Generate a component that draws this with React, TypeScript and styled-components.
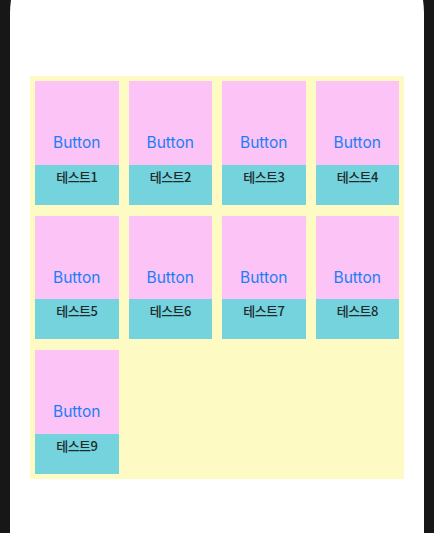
import React from "react";
import styled, { createGlobalStyle } from "styled-components";

const Global = createGlobalStyle`
  html, body { margin: 0; padding: 0; background: #171717; }
  body { font-family: Inter, "Noto Sans CJK KR", sans-serif; overflow: hidden; }
  #root { height: 533px; }
`;

const Frame = styled.div`
  height: 533px;
  padding: 0 10px;
  box-sizing: border-box;
  overflow: hidden;
`;

const Screen = styled.div`
  margin-top: -72px;
  height: 640px;
  background: #ffffff;
  border-radius: 85px 85px 0 0;
  padding: 148px 20px 0;
  box-sizing: border-box;
`;

const Grid = styled.div`
  background: #fdfbc3;
  display: grid;
  grid-template-columns: repeat(4, 1fr);
  column-gap: 10px;
  row-gap: 11px;
  padding: 5px;
`;

const Cell = styled.div`
  display: flex;
  flex-direction: column;
  height: 123.5px;
`;

const ButtonArea = styled.div`
  height: 83.7px;
  background: #fcc3f6;
  display: flex;
  align-items: flex-end;
  justify-content: center;
`;

const Btn = styled.button`
  border: none;
  background: transparent;
  color: #1a7ef9;
  font-family: Inter, sans-serif;
  font-size: 15.5px;
  line-height: 18px;
  padding: 0 0 12.7px;
  cursor: pointer;
`;

const Label = styled.div`
  flex: 1;
  background: #74d3dc;
  color: #1f2a2c;
  font-family: "Noto Sans CJK KR", sans-serif;
  font-size: 13px;
  font-weight: 500;
  line-height: 16px;
  text-align: center;
  padding-top: 4px;
  letter-spacing: -0.6px;
`;

export default function App() {
  const items = Array.from({ length: 9 }, (_, i) => `테스트${i + 1}`);
  return (
    <>
      <Global />
      <Frame>
        <Screen>
          <Grid>
            {items.map((t) => (
              <Cell key={t}>
                <ButtonArea>
                  <Btn>Button</Btn>
                </ButtonArea>
                <Label>{t}</Label>
              </Cell>
            ))}
          </Grid>
        </Screen>
      </Frame>
    </>
  );
}
